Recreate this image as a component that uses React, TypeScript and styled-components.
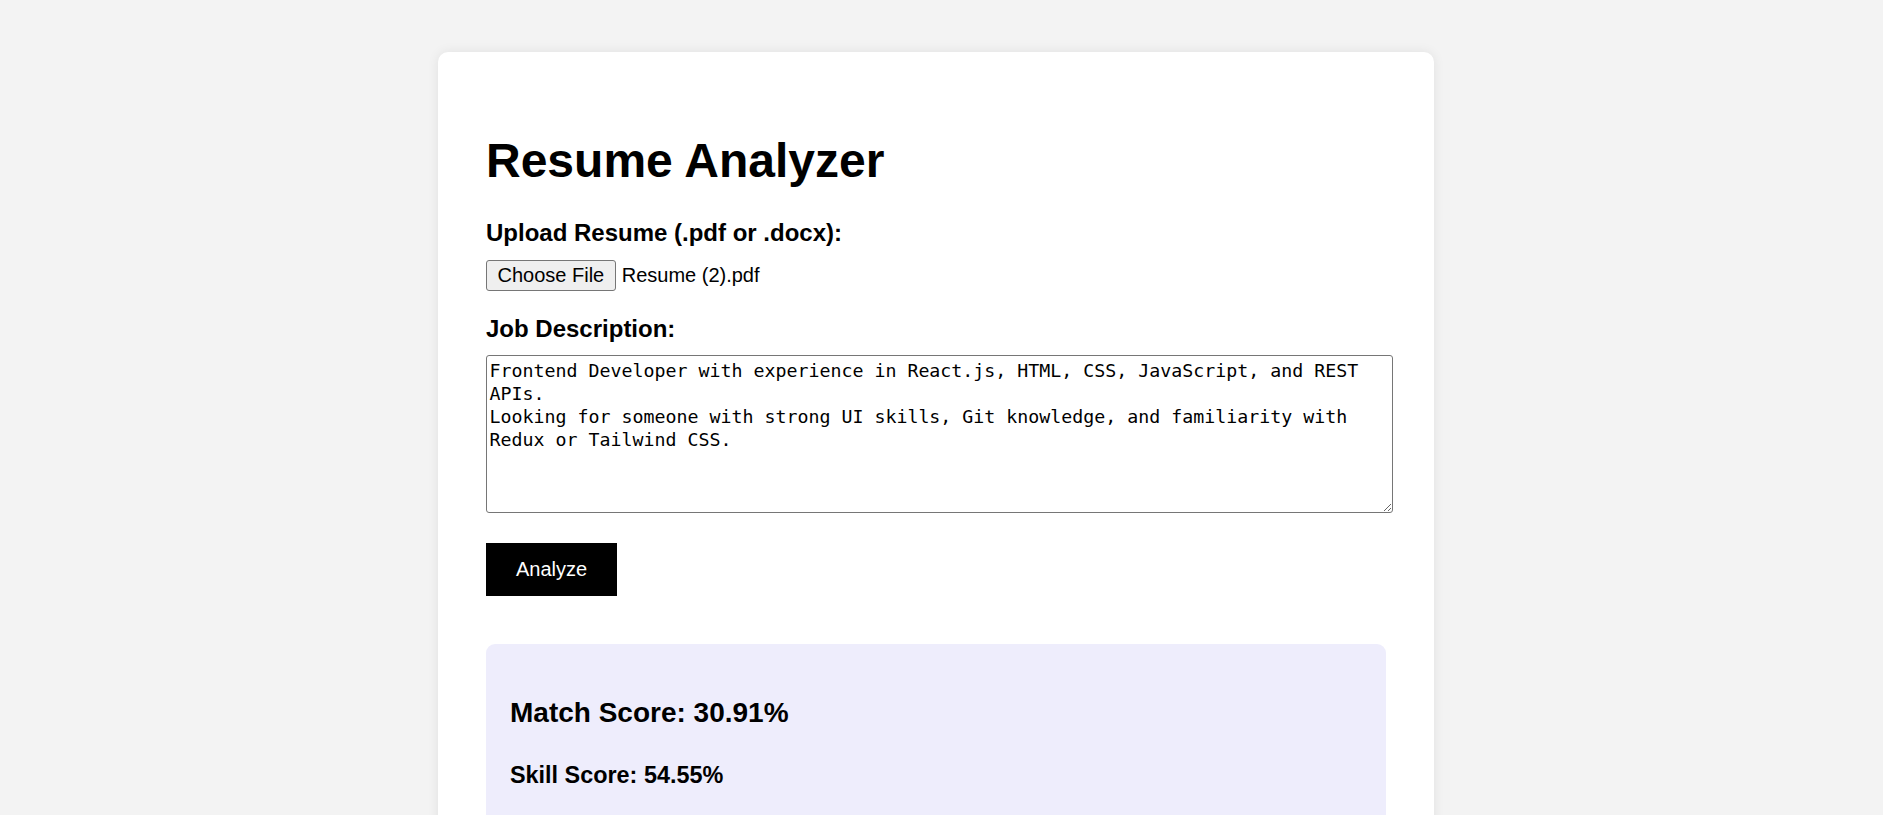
import React from "react";
import styled, { createGlobalStyle } from "styled-components";

const GlobalStyle = createGlobalStyle`
  html, body {
    margin: 0;
    padding: 0;
    background: #f3f3f3;
    overflow: hidden;
  }
  body {
    font-family: "Liberation Sans", Arial, sans-serif;
    color: #000;
  }
`;

const Page = styled.div`
  display: flex;
  justify-content: center;
  padding: 52px 11px 0 0;
  min-height: 815px;
  box-sizing: border-box;
`;

const Card = styled.main`
  width: 996px;
  box-sizing: border-box;
  background: #fff;
  border-radius: 10px;
  box-shadow: 0 0 12px rgba(0, 0, 0, 0.08);
  padding: 48px 48px 60px;
  display: flex;
  flex-direction: column;
  align-items: flex-start;
`;

const Title = styled.h1`
  font-size: 48px;
  font-weight: 700;
  line-height: 55px;
  margin: 33px 0 0;
`;

const Label = styled.label<{ $gap: number }>`
  font-size: 24px;
  font-weight: 700;
  line-height: 28px;
  margin-top: ${(p) => p.$gap}px;
`;

const FileRow = styled.div`
  display: flex;
  align-items: center;
  gap: 6px;
  margin-top: 13px;
  font-size: 20px;
`;

const FileButton = styled.span`
  display: inline-flex;
  align-items: center;
  box-sizing: border-box;
  height: 31px;
  padding: 0 10.5px;
  background: #efefef;
  border: 1px solid #767676;
  border-radius: 3px;
  font-size: 20px;
  line-height: 23px;
`;

const FileName = styled.span`
  font-size: 20px;
  line-height: 23px;
`;

const JobText = styled.textarea`
  display: block;
  width: 900px;
  height: 151px;
  margin-top: 12px;
  padding: 2.5px;
  border: 1px solid #767676;
  border-radius: 3px;
  font-family: "DejaVu Sans Mono", "Liberation Mono", monospace;
  font-size: 18.27px;
  line-height: 23.3px;
  color: #000;
  background: #fff;
  resize: both;
  outline: none;
`;

const AnalyzeButton = styled.button`
  margin-top: 30px;
  height: 53px;
  padding: 0 30px;
  background: #000;
  color: #fff;
  border: none;
  font-family: "Liberation Sans", Arial, sans-serif;
  font-size: 20px;
  line-height: 23px;
  cursor: pointer;
`;

const Results = styled.section`
  align-self: stretch;
  margin-top: 48px;
  padding: 24px 24px 60px;
  background: #eeedfc;
  border-radius: 9px;
  min-height: 300px;
`;

const ScoreHeading = styled.h2<{ $size: number; $top: number }>`
  margin: ${(p) => p.$top}px 0 0;
  font-size: ${(p) => p.$size}px;
  font-weight: 700;
  line-height: normal;
`;

const jobDescription =
  "Frontend Developer with experience in React.js, HTML, CSS, JavaScript, and REST APIs.\nLooking for someone with strong UI skills, Git knowledge, and familiarity with Redux or Tailwind CSS.";

export default function App() {
  return (
    <>
      <GlobalStyle />
      <Page>
        <Card>
          <Title>Resume Analyzer</Title>
          <Label $gap={31}>Upload Resume (.pdf or .docx):</Label>
          <FileRow>
            <FileButton>Choose File</FileButton>
            <FileName>Resume (2).pdf</FileName>
          </FileRow>
          <Label $gap={24}>Job Description:</Label>
          <JobText defaultValue={jobDescription} spellCheck={false} />
          <AnalyzeButton>Analyze</AnalyzeButton>
          <Results>
            <ScoreHeading $size={28} $top={29}>Match Score: 30.91%</ScoreHeading>
            <ScoreHeading as="h3" $size={23.4} $top={33}>Skill Score: 54.55%</ScoreHeading>
          </Results>
        </Card>
      </Page>
    </>
  );
}
